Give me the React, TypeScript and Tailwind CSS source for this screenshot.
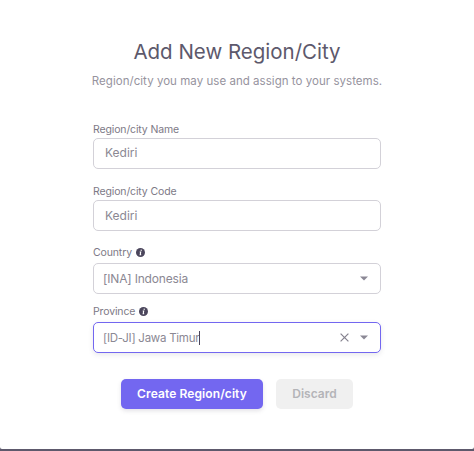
import React from "react";

function InfoIcon() {
  return (
    <svg width="9" height="9" viewBox="0 0 9 9" className="block shrink-0">
      <circle cx="4.5" cy="4.5" r="4.5" fill="#4b465c" />
      <path d="M5.3 1.6l-.2 1.2M3.7 4h1L4.2 6.7h1" fill="none" stroke="#fff" strokeWidth="1.1" />
    </svg>
  );
}

function Caret() {
  return (
    <svg width="8" height="5" viewBox="0 0 8 5" className="block shrink-0">
      <path d="M0 .5h8L4 4.5z" fill="#8b8895" />
    </svg>
  );
}

function ClearIcon() {
  return (
    <svg width="9" height="9" viewBox="0 0 9 9" className="block shrink-0">
      <path d="M.6.6l7.8 7.8M8.4.6L.6 8.4" fill="none" stroke="#85828e" strokeWidth="1.2" />
    </svg>
  );
}

function Label({ text, info }: { text: string; info?: boolean }) {
  return (
    <div className="flex h-4 items-center gap-[4px] text-[10.5px] leading-4 tracking-[-0.13px] text-[#7d7986]">
      <span className="pt-[2px]">{text}</span>
      {info && <InfoIcon />}
    </div>
  );
}

const box = "flex h-[31px] w-full items-center rounded-[5px] border text-[12px] text-[#8b8893]";

export default function App() {
  return (
    <div className="h-[451px] w-[474px] overflow-hidden bg-[#5d596c] font-['Inter','Liberation_Sans',sans-serif]">
      <main className="flex h-[449px] flex-col items-center rounded-b-[2px] bg-white pt-[36px]">
        <h1 className="h-8 whitespace-nowrap text-[20.5px] leading-8 tracking-[-0.01px] text-[#5d596c]">Add New Region/City</h1>
        <p className="mt-[5px] h-4 whitespace-nowrap text-[11.5px] leading-4 tracking-[0.04px] text-[#96939e]">
          Region/city you may use and assign to your systems.
        </p>
        <form className="mt-[32px] flex w-[288px] flex-col">
          <Label text="Region/city Name" />
          <div className={`${box} mt-px border-[#d3d1d8] pb-px pl-[11px]`}><span>Kediri</span></div>
          <div className="mt-[14px]"><Label text="Region/city Code" /></div>
          <div className={`${box} mt-px border-[#d3d1d8] pl-[11px]`}><span>Kediri</span></div>
          <div className="mt-[13px]"><Label info text="Country" /></div>
          <div className={`${box} mt-[3px] justify-between border-[#d3d1d8] pl-[9px] pr-[12px]`}>
            <span className="tracking-[-0.17px]">[INA] Indonesia</span>
            <Caret />
          </div>
          <div className="mt-[9px]"><Label info text="Province" /></div>
          <div className={`${box} mt-[3px] border-[#7367f0] pl-[9px] pr-[12px] shadow-[0_2px_5px_rgba(75,70,92,0.12)]`}>
            <span className="pt-[2px] text-[11.5px] tracking-[-0.26px]">[ID-JI] Jawa Timur</span>
            <span className="h-[14px] w-px bg-[#4b465c]" />
            <span className="ml-auto flex items-center gap-[11px]"><ClearIcon /><Caret /></span>
          </div>
        </form>
        <div className="mt-[26px] flex gap-[13px] text-[12px] font-semibold">
          <button className="h-[30px] w-[142px] whitespace-nowrap rounded-[5px] bg-[#7367f0] tracking-[0.1px] text-white shadow-[0_2px_4px_rgba(75,70,92,0.15)]">
            <span>Create Region/city</span>
          </button>
          <button className="h-[30px] w-[77px] rounded-[5px] bg-[#f0f0f0] text-[#b4b4b8]"><span>Discard</span></button>
        </div>
      </main>
    </div>
  );
}
